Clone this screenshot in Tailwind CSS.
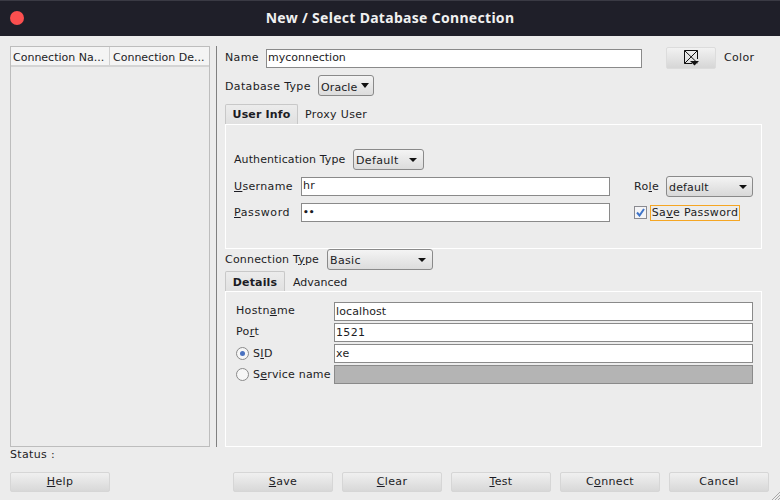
<!DOCTYPE html>
<html lang="en">
<head>
  <meta charset="UTF-8" />
  <title>New / Select Database Connection</title>
  <script src="https://cdn.jsdelivr.net/npm/@tailwindcss/browser@4"></script>
</head>
<body class="w-[780px] h-[500px] overflow-hidden bg-[#ececec] text-[#1c1c24] font-['DejaVu_Sans',sans-serif] text-[11px] leading-[14px] tracking-[0.35px]">
  <div class="relative h-[36px] flex items-center justify-center pb-[2px] bg-[#1f1f29] border-t border-[#3a3a44]">
    <span class="absolute left-[10px] top-[10px] w-[14px] h-[14px] rounded-full bg-[#fb4f4f]"></span>
    <span class="font-['Noto_Sans',sans-serif] font-bold text-[14px] tracking-[0.3px] text-[#f0f0f0]">New / Select Database Connection</span>
  </div>

  <div class="flex h-[411px]">
    <!-- connection list -->
    <div class="ml-[10px] mt-[10px] w-[200px] border border-[#bdbdbd] flex flex-col">
      <div class="h-[20px] flex bg-[#f4f4f4] border-b-2 border-[#d4d4d4] tracking-normal">
        <div class="w-[99px] pl-[2px] border-r border-[#d0d0d0] leading-[21px] whitespace-nowrap">Connection Na...</div>
        <div class="pl-[3px] leading-[21px] whitespace-nowrap">Connection De...</div>
      </div>
    </div>

    <div class="ml-[6px] mt-[10px] w-[1px] bg-[#808080]"></div>

    <div class="ml-[8px] w-[537px] flex flex-col">
      <div class="mt-[11px] h-[22px] flex items-center">
        <span class="w-[41px]">Name</span>
        <div class="w-[376px] h-[19px] bg-white border border-[#8a8a8a] pl-[1px] leading-[16px] tracking-normal">myconnection</div>
        <div class="ml-[24px] w-[50px] h-[22px] flex items-center justify-center rounded-[2px] border border-[#dcdcdc] bg-gradient-to-b from-[#f2f2f2] to-[#d6d6d6]">
          <svg width="16" height="16" viewBox="0 0 16 16"><path d="M1.500 .5H14.500V9M9 13.500H1.500V.5M1.500 .5L14.500 13M14.500 .5L1.500 13.500" fill="none" stroke="#111" stroke-width="1"/><path d="M7 11H16L11.500 15.500Z" fill="#111"/></svg>
        </div>
        <span class="ml-[8px]">Color</span>
      </div>
      <div class="mt-[6px] h-[21px] flex items-center">
        <span class="w-[93px] pt-[2px]">Database Type</span>
        <div class="w-[56px] h-[21px] rounded-[3px] border border-[#8a8a8a] bg-gradient-to-b from-[#f4f4f4] to-[#dcdcdc] flex items-center justify-between pl-[2px] pr-[4px]">
          <span class="pt-[4px] tracking-[0.1px]">Oracle</span><span class="w-0 h-0 border-x-[4px] border-x-transparent border-t-[5px] border-t-[#111]"></span>
        </div>
      </div>

      <div class="mt-[8px] h-[21px] flex">
        <div class="w-[73px] h-[21px] rounded-t-[2px] border border-b-0 border-[#c8c8c8] bg-gradient-to-b from-[#ececec] to-[#e0e0e0] text-center font-bold leading-[20px] tracking-[0.15px]">User Info</div>
        <div class="pl-[7px] leading-[21px]">Proxy User</div>
      </div>
      <div class="h-[125px] -mt-px border border-white px-[8px] flex flex-col">
        <div class="mt-[24px] h-[21px] flex items-center">
          <span class="w-[119px] tracking-[0.1px]">Authentication Type</span>
          <div class="w-[71px] h-[21px] rounded-[3px] border border-[#8a8a8a] bg-gradient-to-b from-[#f4f4f4] to-[#dcdcdc] flex items-center justify-between pl-[2px] pr-[6px]">
            <span class="pt-[2px]">Default</span><span class="w-0 h-0 border-x-[4px] border-x-transparent border-t-[4px] border-t-[#111]"></span>
          </div>
        </div>
        <div class="mt-[6px] h-[21px] flex items-center">
          <span class="w-[67px]"><u>U</u>sername</span>
          <div class="w-[309px] h-[19px] bg-white border border-[#8a8a8a] pl-[1px] leading-[16px]">hr</div>
          <span class="ml-[24px] w-[32px]">Ro<u>l</u>e</span>
          <div class="w-[87px] h-[21px] rounded-[3px] border border-[#8a8a8a] bg-gradient-to-b from-[#f4f4f4] to-[#d8d8d8] flex items-center justify-between pl-[2px] pr-[5px]">
            <span class="pt-[2px] tracking-[0.15px]">default</span><span class="w-0 h-0 border-x-[4px] border-x-transparent border-t-[4px] border-t-[#111]"></span>
          </div>
        </div>
        <div class="mt-[6px] h-[19px] flex items-center">
          <span class="w-[67px] tracking-[0.6px]"><u>P</u>assword</span>
          <div class="w-[309px] h-[19px] bg-white border border-[#8a8a8a] pl-[1px] leading-[16px] tracking-[0px] text-[9px] font-bold">••</div>
          <div class="ml-[24px] w-[13px] h-[13px] border border-[#8a8a90] bg-[#f4f4f6] flex items-center justify-center">
            <svg width="9" height="9" viewBox="0 0 9 9"><path d="M1 4.500L3.500 7.500L8 1" fill="none" stroke="#3f74c8" stroke-width="2"/></svg>
          </div>
          <div class="ml-[3px] h-[16px] w-[90px] border border-[#f5a623] text-center leading-[14px]">Sa<u>v</u>e Password</div>
        </div>
      </div>

      <div class="h-[21px] flex items-center">
        <span class="w-[102px] tracking-[0.2px]">Connection T<u>y</u>pe</span>
        <div class="w-[106px] h-[21px] rounded-[3px] border border-[#8a8a8a] bg-gradient-to-b from-[#f4f4f4] to-[#dcdcdc] flex items-center justify-between pl-[2px] pr-[6px]">
          <span class="pt-[2px]">Basic</span><span class="w-0 h-0 border-x-[4px] border-x-transparent border-t-[4px] border-t-[#111]"></span>
        </div>
      </div>

      <div class="mt-[1px] h-[21px] flex">
        <div class="w-[60px] h-[21px] rounded-t-[2px] border border-b-0 border-[#c8c8c8] bg-gradient-to-b from-[#ececec] to-[#e0e0e0] text-center font-bold leading-[22px] tracking-[0.15px]">Details</div>
        <div class="pl-[8px] leading-[23px] tracking-normal">Advanced</div>
      </div>
      <div class="flex-1 -mt-px border border-white pl-[10px] flex flex-col gap-[2px] pt-[10px]">
        <div class="h-[19px] flex">
          <span class="w-[98px] leading-[17px]">Hostn<u>a</u>me</span>
          <div class="w-[419px] h-[19px] bg-white border border-[#8a8a8a] pl-[1px] leading-[17px] tracking-[0.1px]">localhost</div>
        </div>
        <div class="h-[19px] flex">
          <span class="w-[98px] leading-[17px]">Po<u>r</u>t</span>
          <div class="w-[419px] h-[19px] bg-white border border-[#8a8a8a] pl-[1px] leading-[17px]">1521</div>
        </div>
        <div class="h-[19px] flex items-center">
          <span class="w-[13px] h-[13px] rounded-full border border-[#8a8a8a] bg-[#f6f6f6] flex items-center justify-center"><span class="w-[5px] h-[5px] rounded-full bg-[#4a72c0]"></span></span>
          <span class="ml-[4px] w-[81px]">S<u>I</u>D</span>
          <div class="w-[419px] h-[19px] bg-white border border-[#8a8a8a] pl-[1px] leading-[17px]">xe</div>
        </div>
        <div class="h-[19px] flex items-center">
          <span class="w-[13px] h-[13px] rounded-full border border-[#8a8a8a] bg-[#f6f6f6]"></span>
          <span class="ml-[4px] w-[81px] whitespace-nowrap tracking-[0.2px]">S<u>e</u>rvice name</span>
          <div class="w-[419px] h-[19px] bg-[#b4b4b4] border border-[#8a8a8a]"></div>
        </div>
      </div>
    </div>
  </div>

  <div class="ml-[10px] mt-[1px] h-[14px]">Status :</div>

  <div class="relative mt-[10px] pl-[10px] flex text-center">
    <div class="w-[100px] h-[20px] rounded-[2px] border border-[#d6d6d6] bg-gradient-to-b from-[#f0f0f0] to-[#d8d8d8] leading-[18px]"><u>H</u>elp</div>
    <div class="ml-[123px] w-[100px] h-[20px] rounded-[2px] border border-[#d6d6d6] bg-gradient-to-b from-[#f0f0f0] to-[#d8d8d8] leading-[18px]"><u>S</u>ave</div>
    <div class="ml-[9px] w-[100px] h-[20px] rounded-[2px] border border-[#d6d6d6] bg-gradient-to-b from-[#f0f0f0] to-[#d8d8d8] leading-[18px]"><u>C</u>lear</div>
    <div class="ml-[9px] w-[100px] h-[20px] rounded-[2px] border border-[#d6d6d6] bg-gradient-to-b from-[#f0f0f0] to-[#d8d8d8] leading-[18px]"><u>T</u>est</div>
    <div class="ml-[9px] w-[100px] h-[20px] rounded-[2px] border border-[#d6d6d6] bg-gradient-to-b from-[#f0f0f0] to-[#d8d8d8] leading-[18px]">C<u>o</u>nnect</div>
    <div class="ml-[9px] w-[100px] h-[20px] rounded-[2px] border border-[#d6d6d6] bg-gradient-to-b from-[#f0f0f0] to-[#d8d8d8] leading-[18px]">Cancel</div>
  </div>

  <svg class="absolute right-0 bottom-0" width="9" height="9" viewBox="0 0 9 9"><path d="M9 1L1 9M9 4L4 9M9 7L7 9" stroke="#a8a8a8" stroke-width="1" fill="none"/></svg>
</body>
</html>
